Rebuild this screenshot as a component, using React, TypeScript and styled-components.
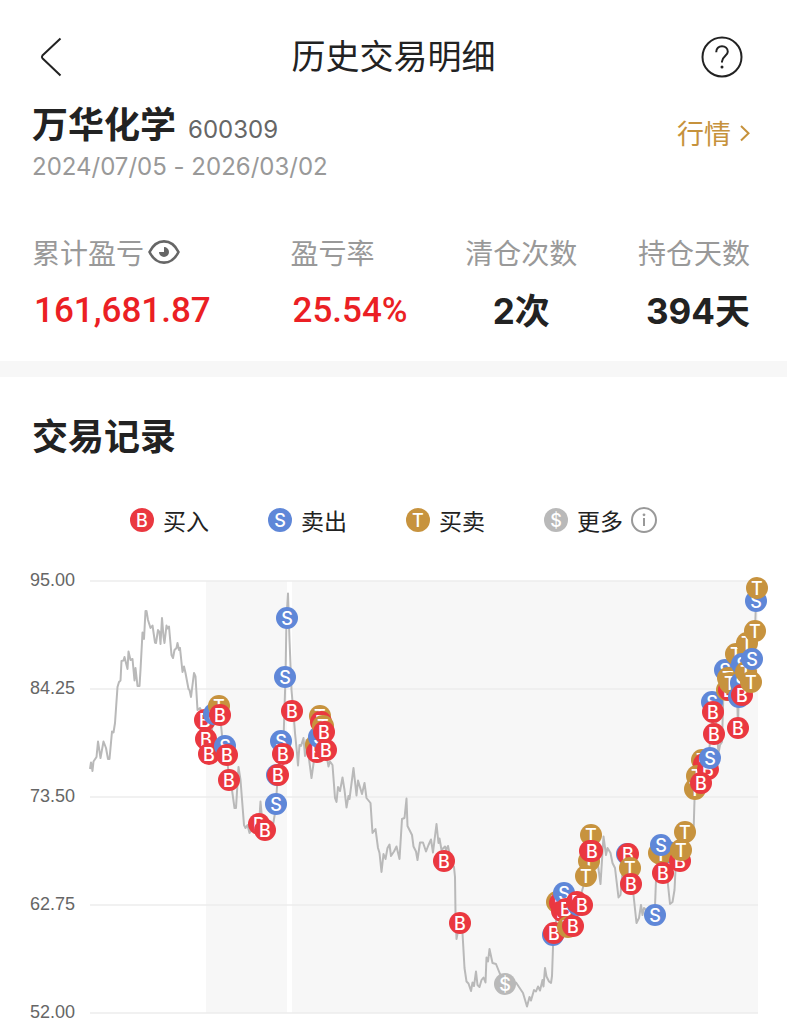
import React from 'react';
import styled, { createGlobalStyle } from 'styled-components';

const CJK = `"Noto Sans CJK SC", sans-serif`;

const GlobalStyle = createGlobalStyle`
  *, *::before, *::after { box-sizing: border-box; }
  body {
    margin: 0;
    background: #fff;
    color: #222;
    font-family: Inter, ${CJK};
  }
  h1, h2, p, dl, dd, ul { margin: 0; padding: 0; }
  svg { display: block; }
`;

const Page = styled.div`
  width: 100%;
  overflow: hidden;
`;

const TopBar = styled.header`
  display: grid;
  grid-template-columns: 1fr auto 1fr;
  align-items: center;
  padding: 36px 40px 0;
`;

const PageTitle = styled.h1`
  padding-bottom: 4px;
  font: 400 34px/38px ${CJK};
  color: #222;
`;

const IconButton = styled.button<{ $side?: 'start' | 'end' }>`
  justify-self: ${({ $side }) => $side || 'auto'};
  display: flex;
  padding: 0;
  border: 0;
  background: none;
  color: inherit;
  cursor: pointer;
`;

const Summary = styled.section`
  padding: 22px 37px 28px 32px;
  border-bottom: 16px solid #f7f7f7;
`;

const StockRow = styled.div`
  display: flex;
  align-items: center;
  justify-content: space-between;
  height: 46px;
`;

const StockName = styled.h2`
  font: 700 36px/44px ${CJK};
`;

const NameLine = styled.div`
  display: flex;
  align-items: baseline;
  gap: 12px;
`;

const Code = styled.span`
  font-size: 24px;
  line-height: 32px;
  color: #666;
`;

const Period = styled.p`
  margin-top: 5px;
  font-size: 24px;
  line-height: 32px;
  font-variant-ligatures: no-contextual;
  color: #999;
`;

const QuoteLink = styled.a`
  display: flex;
  align-items: center;
  gap: 8px;
  padding-top: 20px;
  font: 400 27px/28px ${CJK};
  color: #c6923c;
  text-decoration: none;
`;

const Stats = styled.dl`
  display: grid;
  grid-template-columns: 259fr 175fr 173fr 111fr;
  margin-top: 51px;
`;

const Stat = styled.div<{ $align?: 'start' | 'center' | 'end' }>`
  display: flex;
  flex-direction: column;
  width: max-content;
  gap: 19px;
  align-items: ${({ $align }) => $align || 'start'};
`;

const StatLabel = styled.dt`
  display: flex;
  align-items: center;
  gap: 3px;
  font: 400 28px/36px ${CJK};
  color: #999;
`;

const StatValue = styled.dd<{ $gain?: boolean }>`
  padding-left: ${({ $gain }) => ($gain ? 2 : 0)}px;
  font-family: ${({ $gain }) => ($gain ? 'Roboto' : 'Inter')}, ${CJK};
  font-size: 35px;
  font-weight: ${({ $gain }) => ($gain ? 500 : 700)};
  line-height: 44px;
  color: ${({ $gain }) => ($gain ? '#eb1f24' : '#222')};
`;

const Records = styled.section`
  padding-top: 33px;
`;

const RecordsTitle = styled.h2`
  padding: 0 32px;
  font: 700 36px/48px ${CJK};
`;

const Legend = styled.ul`
  display: flex;
  justify-content: center;
  gap: 59px;
  margin-top: 48px;
  list-style: none;
`;

const LegendItem = styled.li`
  display: flex;
  align-items: center;
  gap: 8px;
  font: 400 23px/28px ${CJK};
`;

const LegendDot = styled.svg`
  margin-right: 1px;
`;

const ChartSvg = styled.svg`
  width: 100%;
  height: auto;
  margin-top: 30px;
`;

const MarkerLetter = styled.text`
  font: 500 18px Inter, sans-serif;
  fill: #fff;
  text-anchor: middle;
`;

const AxisLabel = styled.text`
  font: 400 18px "Liberation Sans", sans-serif;
  fill: #666;
  text-anchor: end;
`;

type Kind = 'B' | 'S' | 'T' | '$';
const KIND_COLORS: Record<Kind, string> = { B: '#ea3840', S: '#5f87d8', T: '#c7933e', $: '#b9b9b9' };

const Marker = ({ kind, x, y, r = 11 }: { kind: Kind; x: number; y: number; r?: number }) => (
  <g>
    <circle cx={x} cy={y} r={r} fill={KIND_COLORS[kind]} />
    <MarkerLetter x={x} y={y + 7}>{kind}</MarkerLetter>
  </g>
);

const LEGEND: { kind: Kind; label: string }[] = [
  { kind: 'B', label: '买入' },
  { kind: 'S', label: '卖出' },
  { kind: 'T', label: '买卖' },
  { kind: '$', label: '更多' },
];

const GRID = [
  { y: 581, label: '95.00' },
  { y: 689, label: '84.25' },
  { y: 797, label: '73.50' },
  { y: 905, label: '62.75' },
  { y: 1013, label: '52.00' },
];

const PRICE_LINE = `
90,769 91,762.5 92.5,771 93.5,761.5 96.5,757 98,741.5 100.5,758 103.5,741.5 106,748 108,759 109.5,759
112,731.5 113.5,732.5 115,723 117.5,687 119,682 120.5,680.5 121.5,661 123.5,660.5 124.5,657 127.5,669
128.5,651.5 130.5,660 132.5,659 134.5,680.5 135.5,668 137.5,686 139.5,686 140.5,670 142.5,632.5 144,639
145.5,611 146.5,611 148,620 150.5,628 152.5,625.5 155,642.5 156,643 158,630 159.5,632 160.5,644 162,618
163.5,636.5 164.5,643 166.5,625.5 167.5,628.5 169,626.5 171.5,655 173,658 174.5,650 176.5,648 177.5,643
179,650 180,648 182.5,672 184,666.5 185.5,673 188.5,689 189.5,690 191,697 194,673 195.5,676.5 197.5,710
200,708 205,720 207,740 209,754 214,714 218,706 220,715 222,735 225,746 227,755 229,780 232,790
234.5,808 236,808 238.5,767 240.5,780 244,825 245.5,828 247.5,825 249.5,833 255,825 259,824 260.5,801.5
262,818 265,828 273,825 275.5,810 277,787 281,753 283.5,740 285.5,677 286.5,618 288,593.5 289.5,640
291.5,690 293.5,713 295,733 297,753 298,765.5 299.5,745 301,746 303.5,738 305,756 306.5,740 311.5,778
315,753 320,716 324,732 325.5,750 328.5,766.5 330,761.5 332.5,765 335,798 336.5,802 338,787 340,791
342.5,777.5 344.5,790 346.5,807.5 348.5,796 349.5,799 353.5,768 356.5,795.5 358,780.5 362,794 364.5,783
366.5,798 370.5,803 372.5,833 375.5,829 378,848 379.5,853 381.5,872 383.5,854 385.5,859 387.5,848
389.5,844.5 391,856 394,851.5 396.5,846.5 399.5,859 402,819 404.5,818 406.5,798.5 407.5,826 412,835
413.5,846.5 416,851.5 417.5,860 420,842.5 423,842.5 426,851.5 428.5,845 431,839.5 433,852.5 434.5,840
436.5,824 438.5,843 439.5,838.5 441.5,850 445,846.5 446,850 448,846 451.5,863 454,867 455,877 455.5,913
456.5,939 459.5,923 462.5,933 464.5,968 466.5,981.5 468.5,983.5 471,991 472.5,982.5 474,986 476,971.5
477.5,985 479.5,987 481.5,980 483.5,977.5 485.5,982.5 486.5,957.5 488,961.5 489.5,949 492.5,963 496,964
500,974 505,983 516,982.5 523,993 527,1006.5 529.5,997 531,1000.5 534,990 536,991.5 538,986.5 540,990.5
542.5,980 543.5,986.5 545,968 546.5,976.5 549,981.5 551,983 552,976 553.5,933 560,903 565,893 568,927
573,926 578,905 586,877 591,835 596,850 600.5,884 603.5,836.5 606,855 607.5,848 610.5,853 612.5,863
615,868 618.5,897.5 620.5,895 623,866 628,855 631,884 633.5,895 636.5,923 639,918 641,905 642.5,915
644,908 654,915 655,906 656,880 661,845 663,873 667.5,880 670,904 672.5,902 674.5,890 675.5,870 680,850
685,832 693.5,834 694.5,800 696,777 701,770 708,762 713,712 716,720 718.5,753 720,745 722,742 723.5,690
728,680 736,654 738,728 739,683 743,664 750,682 752,659 755,631 756,601 757,588`;

const MARKERS: [Kind, number, number][] = [
  ['B', 205, 720], ['B', 206, 739], ['B', 209, 754], ['S', 214, 714], ['T', 219, 706], ['B', 220, 715],
  ['S', 225, 746], ['B', 227, 755], ['B', 229, 780],
  ['B', 259, 824], ['B', 265, 830], ['S', 276, 804], ['S', 277, 775], ['B', 278, 775],
  ['S', 281, 741], ['B', 283, 754], ['S', 285, 677], ['S', 287, 618], ['B', 292, 711],
  ['T', 316, 745], ['B', 317, 752], ['S', 319, 737], ['T', 320, 716], ['B', 321, 722], ['T', 323, 726],
  ['B', 324, 732], ['B', 326, 750],
  ['B', 444, 861], ['B', 460, 923], ['$', 505, 984],
  ['S', 553, 935], ['B', 554, 933], ['T', 557, 902], ['B', 560, 903], ['B', 562, 911], ['S', 564, 893],
  ['B', 566, 909], ['T', 568, 927], ['B', 573, 926], ['S', 578, 905], ['B', 577, 902], ['B', 582, 905],
  ['T', 589, 861], ['T', 586, 876], ['T', 591, 835], ['B', 590, 851], ['B', 592, 851],
  ['S', 627, 854], ['B', 628, 854], ['T', 630, 868], ['B', 631, 884], ['S', 655, 915],
  ['T', 659, 853], ['S', 668, 852], ['T', 661, 854], ['S', 661, 845], ['B', 663, 873],
  ['B', 680, 861], ['T', 681, 850], ['T', 685, 832],
  ['T', 702, 760], ['B', 704, 764], ['T', 697, 776], ['T', 695, 789], ['B', 708, 769], ['B', 701, 783],
  ['S', 710, 758], ['B', 714, 734], ['S', 712, 702], ['B', 713, 712], ['B', 738, 728],
  ['S', 725, 670], ['T', 727, 690], ['B', 729, 690], ['T', 728, 678], ['T', 730, 683],
  ['T', 736, 654], ['T', 747, 643], ['T', 755, 631], ['S', 739, 697], ['S', 742, 664], ['S', 741, 683],
  ['T', 746, 672], ['B', 742, 695], ['S', 752, 659], ['T', 751, 682], ['S', 756, 601], ['T', 757, 588],
];

const BackIcon = () => (
  <svg width="22" height="40" viewBox="0 0 22 40" fill="none" stroke="#222" strokeWidth="2" strokeLinejoin="round">
    <path d="M20.5 1.5 2.4 18.6Q1.4 20 2.4 21.2L20.5 38.5" />
  </svg>
);

const HelpIcon = () => (
  <svg width="46" height="42" viewBox="0 0 46 42" fill="none" stroke="#222" strokeWidth="2">
    <circle cx="21" cy="21" r="19.5" />
    <path d="M15.2 16.2C15.2 12.2 17.8 10.2 21 10.2S26.8 12.4 26.8 15.8C26.8 19.8 21 20.6 21 25.6V26.6" />
    <circle cx="21" cy="31" r="1.5" fill="#222" stroke="none" />
  </svg>
);

const ChevronIcon = () => (
  <svg width="11" height="18" viewBox="0 0 11 18" fill="none" stroke="#c6923c" strokeWidth="2">
    <path d="M2 2 9.5 9.2 2 16.5" />
  </svg>
);

const EyeIcon = () => (
  <svg width="34" height="26" viewBox="0 0 34 26" fill="none">
    <path d="M2.5 13C9.5-1.2 24.5-1.2 31.5 13C24.5 27.2 9.5 27.2 2.5 13Z" stroke="#666" strokeWidth="2.6" strokeLinejoin="round" />
    <path d="M17 8V13H12A5 5 0 1 0 17 8Z" fill="#666" />
  </svg>
);

const InfoIcon = () => (
  <svg width="26" height="26" viewBox="0 0 26 26" fill="none" stroke="#999" strokeWidth="2">
    <circle cx="13" cy="13" r="12" />
    <path d="M13 11V19" />
    <circle cx="13" cy="7.8" r="1.4" fill="#999" stroke="none" />
  </svg>
);

const TradeChart = () => (
  <ChartSvg viewBox="0 564 787 460" role="img" aria-label="交易记录">
    <rect x="206" y="581" width="81" height="432" fill="#f7f7f7" />
    <rect x="292" y="581" width="466" height="432" fill="#f7f7f7" />
    {GRID.map(({ y, label }) => (
      <g key={label}>
        <path d={`M90 ${y}H758`} stroke="#ececec" strokeWidth="1.5" />
        <AxisLabel x="75" y={y + 5}>{label}</AxisLabel>
      </g>
    ))}
    <polyline points={PRICE_LINE} fill="none" stroke="#b9b9b9" strokeWidth="2" strokeLinejoin="round" />
    {MARKERS.map(([kind, x, y], i) => (
      <Marker key={i} kind={kind} x={x} y={y} />
    ))}
  </ChartSvg>
);

export default function App() {
  return (
    <Page>
      <GlobalStyle />
      <TopBar>
        <IconButton $side="start" aria-label="返回"><BackIcon /></IconButton>
        <PageTitle>历史交易明细</PageTitle>
        <IconButton $side="end" aria-label="帮助"><HelpIcon /></IconButton>
      </TopBar>
      <Summary>
        <StockRow>
          <NameLine>
            <StockName>万华化学</StockName>
            <Code>600309</Code>
          </NameLine>
          <QuoteLink href="#quote">行情<ChevronIcon /></QuoteLink>
        </StockRow>
        <Period>2024/07/05 - 2026/03/02</Period>
        <Stats>
          <Stat>
            <StatLabel>
              累计盈亏
              <IconButton aria-label="隐藏金额"><EyeIcon /></IconButton>
            </StatLabel>
            <StatValue $gain>161,681.87</StatValue>
          </Stat>
          <Stat>
            <StatLabel>盈亏率</StatLabel>
            <StatValue $gain>25.54%</StatValue>
          </Stat>
          <Stat $align="center">
            <StatLabel>清仓次数</StatLabel>
            <StatValue>2次</StatValue>
          </Stat>
          <Stat $align="end">
            <StatLabel>持仓天数</StatLabel>
            <StatValue>394天</StatValue>
          </Stat>
        </Stats>
      </Summary>
      <Records>
        <RecordsTitle>交易记录</RecordsTitle>
        <Legend>
          {LEGEND.map(({ kind, label }) => (
            <LegendItem key={kind}>
              <LegendDot width="24" height="24" viewBox="0 0 24 24"><Marker kind={kind} x={12} y={12} r={12} /></LegendDot>
              {label}
              {kind === '$' && <IconButton aria-label="更多说明"><InfoIcon /></IconButton>}
            </LegendItem>
          ))}
        </Legend>
        <TradeChart />
      </Records>
    </Page>
  );
}
